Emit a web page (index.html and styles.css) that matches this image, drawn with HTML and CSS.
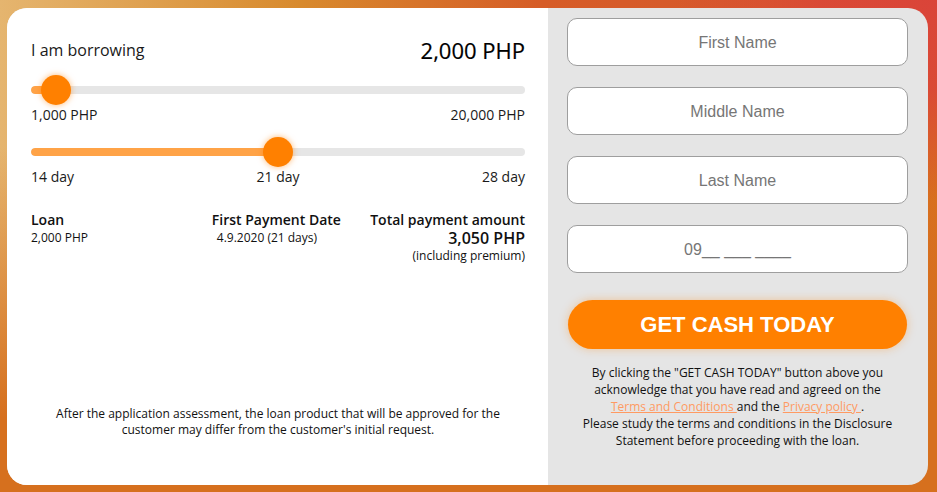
FILE: index.html
```html
<!DOCTYPE html>
<html>
<head>
<meta charset="utf-8">
<link rel="stylesheet" href="styles.css">
</head>
<body>
<div class="card">
  <section class="calc">
    <div class="head">
      <span class="head-label">I am borrowing</span>
      <span class="head-amount">2,000 PHP</span>
    </div>
    <div class="slider slider-amount">
      <div class="track"><div class="fill" style="width:25px"></div></div>
      <div class="thumb" style="left:25px"></div>
    </div>
    <div class="scale scale-amount">
      <span>1,000 PHP</span>
      <span>20,000 PHP</span>
    </div>
    <div class="slider slider-days">
      <div class="track"><div class="fill" style="width:247px"></div></div>
      <div class="thumb" style="left:247px"></div>
    </div>
    <div class="scale scale-days">
      <span>14 day</span>
      <span>21 day</span>
      <span>28 day</span>
    </div>
    <div class="summary">
      <div class="col col-left">
        <div class="col-title">Loan</div>
        <div class="col-value">2,000 PHP</div>
      </div>
      <div class="col col-mid">
        <div class="col-title">First Payment Date</div>
        <div class="col-value col-date">4.9.2020 (21 days)</div>
      </div>
      <div class="col col-right">
        <div class="col-title">Total payment amount</div>
        <div class="col-big">3,050 PHP</div>
        <div class="col-value">(including premium)</div>
      </div>
    </div>
    <p class="note">After the application assessment, the loan product that will be approved for the<br>customer may differ from the customer's initial request.</p>
  </section>
  <section class="form">
    <input class="field" type="text" placeholder="First Name">
    <input class="field" type="text" placeholder="Middle Name">
    <input class="field" type="text" placeholder="Last Name">
    <input class="field field-phone" type="text" placeholder="09__ ___ ____">
    <button class="cta" type="button">GET CASH TODAY</button>
    <p class="legal">By clicking the "GET CASH TODAY" button above you<br>acknowledge that you have read and agreed on the<br><a href="#">Terms and Conditions </a>and the <a href="#">Privacy policy </a>.<br>Please study the terms and conditions in the Disclosure<br>Statement before proceeding with the loan.</p>
  </section>
</div>
</body>
</html>
```
FILE: styles.css
```css
html, body {
  margin: 0;
  padding: 0;
  width: 937px;
  height: 492px;
  overflow: hidden;
}
body {
  background:
    radial-gradient(ellipse 260px 200px at 100% 0%, #da4439 0%, rgba(218,68,57,0.85) 45%, rgba(218,68,57,0) 100%),
    linear-gradient(to bottom, rgba(214,112,30,0) 30%, #d6701e 85%),
    linear-gradient(90deg, #e5b56f 0%, #d88a2d 32%, #d65c27 58%, #d65a2b 75%, #d8701f 100%);
  font-family: "Open Sans", "Liberation Sans", sans-serif;
  color: #111;
}
.card {
  margin: 8px 9px 0 7px;
  width: 921px;
  height: 477px;
  display: flex;
  border-radius: 20px;
  overflow: hidden;
  background: #e5e5e5;
}
.calc {
  width: 494px;
  background: #fff;
  padding: 27px 23px 0 24px;
  display: flex;
  flex-direction: column;
}
.head {
  display: flex;
  justify-content: space-between;
  align-items: center;
  height: 30px;
}
.head-label {
  font-size: 16px;
  color: #1a1a1a;
}
.head-amount {
  font-size: 22px;
  font-weight: 500;
  color: #000;
  -webkit-text-stroke: 0.2px #000;
}
.slider {
  position: relative;
  height: 30px;
  display: flex;
  align-items: center;
}
.slider-amount { margin-top: 10px; }
.slider-days { margin-top: 13px; }
.track {
  width: 100%;
  height: 8px;
  border-radius: 4px;
  background: #e6e6e6;
  overflow: hidden;
}
.fill {
  height: 100%;
  background: #ffa347;
  border-radius: 4px;
}
.thumb {
  position: absolute;
  top: 0;
  width: 30px;
  height: 30px;
  margin-left: -15px;
  border-radius: 50%;
  background: #ff8000;
  box-shadow: 0 0 6px rgba(255,128,0,0.55);
}
.scale {
  display: flex;
  justify-content: space-between;
  color: #1a1a1a;
}
.scale-amount {
  margin-top: 1px;
  font-size: 14px;
  line-height: 18px;
}
.scale-days {
  font-size: 14px;
  line-height: 19px;
}
.summary {
  margin-top: 24px;
  display: flex;
  justify-content: space-between;
}
.col { display: flex; flex-direction: column; }
.col-left { width: 150px; }
.col-mid { width: 150px; align-items: flex-start; margin-left: 34px; }
.col-date { padding-left: 5px; }
.col-right { width: 170px; align-items: flex-end; }
.col-title {
  font-size: 14px;
  line-height: 19px;
  font-weight: 600;
  color: #111;
}
.col-value {
  font-size: 12px;
  line-height: 17px;
  color: #111;
}
.col-big {
  font-size: 16px;
  line-height: 18px;
  font-weight: 600;
  color: #111;
}
.note {
  margin: auto 0 47px 0;
  font-size: 12px;
  line-height: 16px;
  text-align: center;
  color: #111;
}
.form {
  width: 341px;
  padding: 10px 20px 0 19px;
  display: flex;
  flex-direction: column;
}
.field {
  box-sizing: border-box;
  height: 48px;
  margin: 0 0 21px 0;
  padding: 2px 0 0 0;
  border: 1px solid #9e9e9e;
  border-radius: 10px;
  background: #fff;
  font-family: "Liberation Sans", Arial, sans-serif;
  font-size: 16px;
  text-align: center;
  color: #333;
  outline: none;
}
.field::placeholder { color: #767676; }
.field-phone { margin-bottom: 27px; }
.cta {
  height: 49px;
  margin: 0 1px;
  border: none;
  border-radius: 25px;
  background: #ff8000;
  color: #fff;
  font-family: "Liberation Sans", Arial, sans-serif;
  font-weight: 700;
  font-size: 22px;
  box-shadow: 0 0 10px rgba(255,128,0,0.35);
}
.legal {
  margin: 15px 0 0 0;
  font-size: 12px;
  line-height: 17px;
  text-align: center;
  color: #111;
}
.legal a {
  color: #ff9a62;
  text-decoration: underline;
}
```
